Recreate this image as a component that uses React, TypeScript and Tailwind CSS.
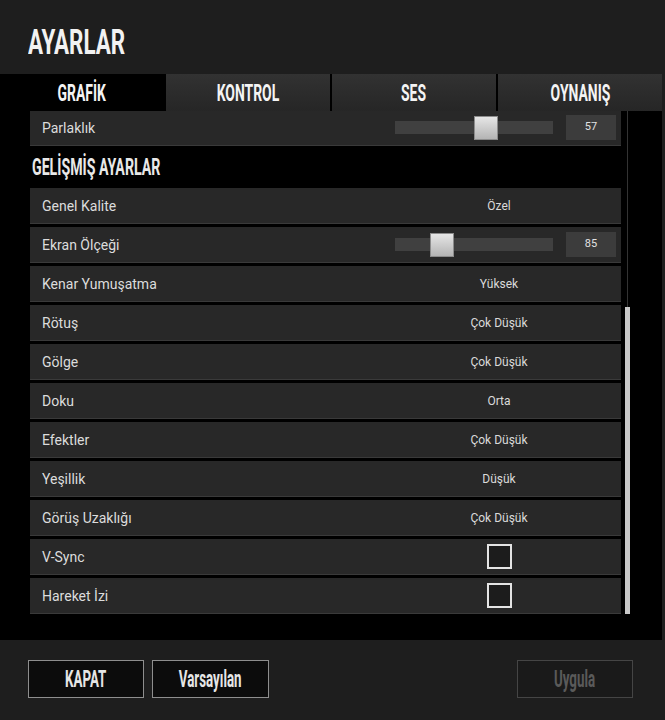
import React from 'react';

type Row =
  | { label: string; kind: 'value'; value: string }
  | { label: string; kind: 'slider'; value: number; offset: number }
  | { label: string; kind: 'check'; checked: boolean };

const rows: Row[] = [
  { label: 'Genel Kalite', kind: 'value', value: 'Özel' },
  { label: 'Ekran Ölçeği', kind: 'slider', value: 85, offset: 35 },
  { label: 'Kenar Yumuşatma', kind: 'value', value: 'Yüksek' },
  { label: 'Rötuş', kind: 'value', value: 'Çok Düşük' },
  { label: 'Gölge', kind: 'value', value: 'Çok Düşük' },
  { label: 'Doku', kind: 'value', value: 'Orta' },
  { label: 'Efektler', kind: 'value', value: 'Çok Düşük' },
  { label: 'Yeşillik', kind: 'value', value: 'Düşük' },
  { label: 'Görüş Uzaklığı', kind: 'value', value: 'Çok Düşük' },
  { label: 'V-Sync', kind: 'check', checked: false },
  { label: 'Hareket İzi', kind: 'check', checked: false },
];

const tabs = ['GRAFİK', 'KONTROL', 'SES', 'OYNANIŞ'];

const SettingRow: React.FC<{ row: Row; className?: string }> = ({ row, className = '' }) => (
  <div
    className={`flex items-center h-[36px] bg-[#282828] border-b border-[#3a3a3a] pl-[12px] ${className}`}
  >
    <span className="flex-1 text-[14px] text-[#dcdcdc] leading-none">{row.label}</span>

    {row.kind === 'value' && (
      <span className="w-[200px] mr-[22px] text-center text-[12px] text-[#dadada]">
        {row.value}
      </span>
    )}

    {row.kind === 'slider' && (
      <div className="flex items-center gap-[13px] mr-[5px]">
        <div className="relative w-[158px] h-[13px] bg-[#404040]">
          {/* thumb */}
          <div
            className="absolute top-1/2 -translate-y-1/2 w-[24px] h-[24px] border border-[#8c8c8c] bg-gradient-to-b from-[#e6e6e6] to-[#b4b4b4]"
            style={{ left: row.offset }}
          />
        </div>
        <div className="w-[50px] h-[25px] bg-[#3c3c3c] flex items-center justify-center text-[11px] text-[#e2e2e2]">
          {row.value}
        </div>
      </div>
    )}

    {row.kind === 'check' && (
      <div className="w-[200px] mr-[22px] flex justify-center">
        <div className="w-[25px] h-[25px] border-2 border-[#e4e4e4] bg-[#1c1c1c]" />
      </div>
    )}
  </div>
);

const CondensedLabel: React.FC<{ children: React.ReactNode; className?: string }> = ({ children, className = '' }) => (
  <span className={`inline-block font-bold scale-x-[0.58] leading-none ${className}`}>{children}</span>
);

const App: React.FC = () => {
  return (
    <div className="w-[665px] h-[720px] bg-[#1e1e1e] flex flex-col font-['Roboto','Liberation_Sans',sans-serif] overflow-hidden">
      {/* Header */}
      <div className="h-[74px] pl-[28px] pt-[25px] shrink-0">
        <span className="inline-block origin-left scale-x-[0.64] text-[35px] font-bold leading-none text-[#f2f2f2]">
          AYARLAR
        </span>
      </div>

      {/* Tabs */}
      <div className="flex gap-[2px] h-[37px] bg-black mr-[3px] shrink-0">
        {tabs.map((tab, i) => (
          <div
            key={tab}
            className={`flex-1 flex items-center justify-center ${
              i === 0 ? 'bg-black' : 'bg-gradient-to-b from-[#323232] to-[#262626]'
            }`}
          >
            <CondensedLabel className="text-[24px] text-[#f4f4f4]">{tab}</CondensedLabel>
          </div>
        ))}
      </div>

      {/* Content */}
      <div className="flex-1 bg-black mr-[3px] flex overflow-hidden">
        <div className="w-[591px] ml-[30px] flex flex-col">
          <SettingRow row={{ label: 'Parlaklık', kind: 'slider', value: 57, offset: 79 }} className="-mt-[1px]" />

          <div className="h-[42px] flex items-center pl-[2px]">
            <span className="inline-block origin-left scale-x-[0.59] text-[24px] font-bold leading-none text-[#e8e8e8]">
              GELİŞMİŞ AYARLAR
            </span>
          </div>

          <div className="flex flex-col gap-[3px]">
            {rows.map(row => (
              <SettingRow key={row.label} row={row} />
            ))}
          </div>
        </div>

        {/* Scrollbar */}
        <div className="ml-[4px] w-[5px] flex flex-col">
          <div className="h-[196px] flex justify-center">
            <div className="w-px bg-[#333333]" />
          </div>
          <div className="h-[307px] bg-[#c8c8c8]" />
        </div>
      </div>

      {/* Footer */}
      <div className="h-[80px] shrink-0 flex items-start pt-[20px] pl-[28px] pr-[32px]">
        <button className="w-[116px] h-[38px] bg-[#0c0c0c] border border-[#8e8e8e] flex items-center justify-center">
          <CondensedLabel className="text-[23px] text-[#e6e6e6]">KAPAT</CondensedLabel>
        </button>
        <button className="ml-[8px] w-[117px] h-[38px] bg-[#0c0c0c] border border-[#8e8e8e] flex items-center justify-center">
          <CondensedLabel className="text-[23px] text-[#e6e6e6]">Varsayılan</CondensedLabel>
        </button>
        <button className="ml-auto w-[116px] h-[38px] bg-[#1a1a1a] border border-[#454545] flex items-center justify-center">
          <CondensedLabel className="text-[23px] text-[#5a5a5a]">Uygula</CondensedLabel>
        </button>
      </div>
    </div>
  );
};

export default App;
